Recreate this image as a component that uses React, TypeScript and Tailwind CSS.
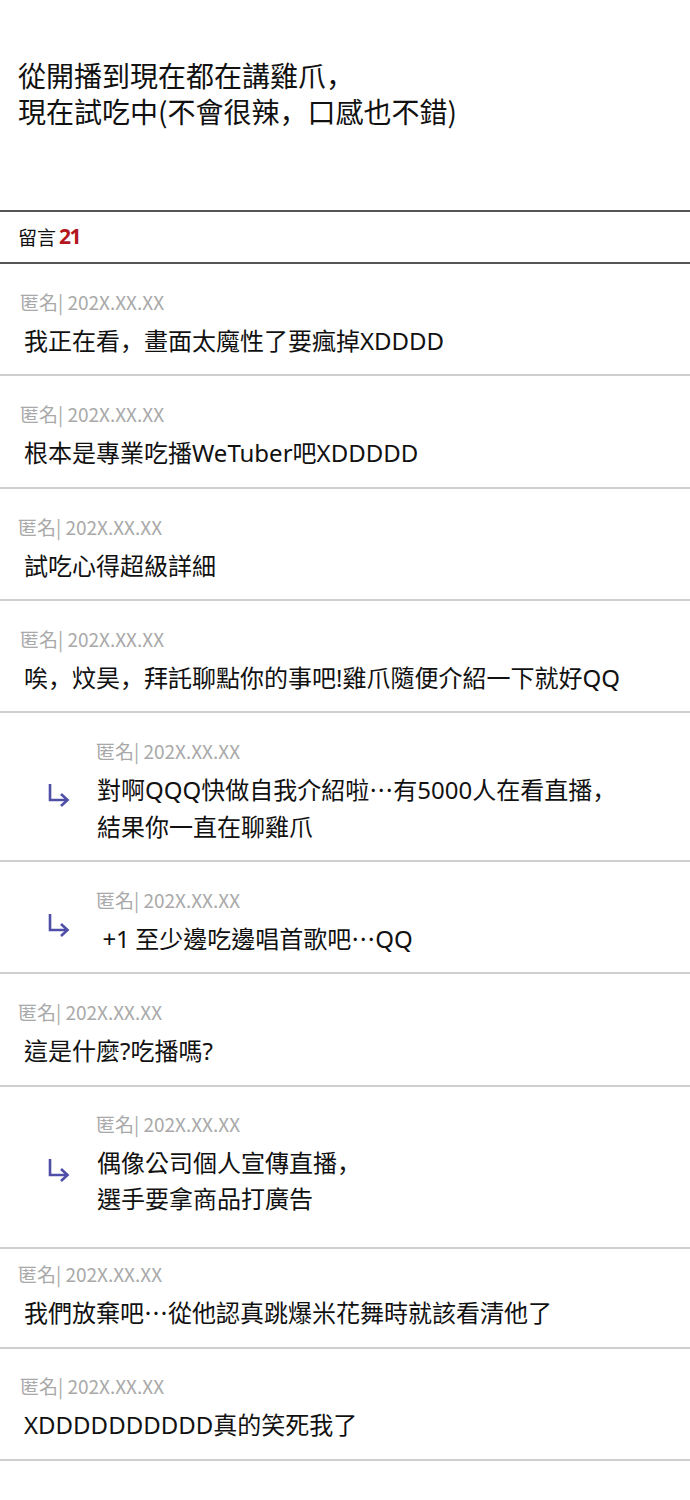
import React from "react";

type Item = {
  reply?: boolean;
  box: string;
  lines: string[];
  arrow?: string;
  spacer?: string;
  text?: string;
};

const items: Item[] = [
  { box: "h-[112px] pt-[26px]", lines: ["我正在看，畫面太魔性了要瘋掉XDDDD"] },
  { box: "h-[113px] pt-[26px]", lines: ["根本是專業吃播WeTuber吧XDDDDD"] },
  { box: "h-[112px] pt-[26px]", spacer: "w-[18px]", text: "ml-[6px]", lines: ["試吃心得超級詳細"] },
  { box: "h-[112px] pt-[26px]", lines: ["唉，炆昊，拜託聊點你的事吧!雞爪隨便介紹一下就好QQ"] },
  { box: "h-[149px] pt-[26px]", reply: true, arrow: "mt-[43px]", lines: ["對啊QQQ快做自我介紹啦…有5000人在看直播，", "結果你一直在聊雞爪"] },
  { box: "h-[112px] pt-[26px]", reply: true, arrow: "mt-[24px]", lines: [" +1 至少邊吃邊唱首歌吧…QQ"] },
  { box: "h-[113px] pt-[26px]", spacer: "w-[18px]", text: "ml-[6px]", lines: ["這是什麼?吃播嗎?"] },
  { box: "h-[162px] pt-[25px]", reply: true, arrow: "mt-[45px]", lines: ["偶像公司個人宣傳直播，", "選手要拿商品打廣告"] },
  { box: "h-[100px] pt-[13px]", spacer: "w-[18px]", text: "ml-[6px]", lines: ["我們放棄吧…從他認真跳爆米花舞時就該看清他了"] },
  { box: "h-[112px] pt-[25px]", lines: ["XDDDDDDDDDD真的笑死我了"] },
];

const LATIN = "font-['Noto_Sans','Noto_Sans_CJK_TC',sans-serif]";
const JP = "font-['Noto_Sans_CJK_JP','Noto_Sans_CJK_TC',sans-serif]";

function Rich({ text }: { text: string }) {
  const parts = text.split(/([A-Za-z0-9+!?]+|，)/).filter((p) => p !== "");
  return (
    <>
      {parts.map((p, i) => {
        if (p === "，") return <span key={i} className={`inline-block ${JP}`}>，</span>;
        if (/^[A-Za-z0-9+!?]+$/.test(p)) return <span key={i} className={`inline-block ${LATIN}`}>{p}</span>;
        return <span key={i} className="inline-block">{p}</span>;
      })}
    </>
  );
}

function Arrow() {
  return (
    <svg width="26" height="26" viewBox="0 0 26 26" fill="none">
      <path d="M4 2 V18 H21" stroke="#4f4fa8" strokeWidth="2.6" strokeLinejoin="miter" />
      <path d="M15 12 L21.5 18 L15 24" stroke="#4f4fa8" strokeWidth="2.6" strokeLinejoin="miter" />
    </svg>
  );
}

function Comment({ it }: { it: Item }) {
  return (
    <div className={`flex box-border border-b-2 border-[#cfcfcf] ${it.box}`}>
      {it.reply ? (
        <div className="w-[96px] shrink-0 pl-[46px]">
          <div className={it.arrow}>
            <Arrow />
          </div>
        </div>
      ) : (
        <div className={`shrink-0 ${it.spacer ?? "w-[20px]"}`} />
      )}
      <div className="flex flex-col">
        <div className="h-[24px] whitespace-pre text-[19px] leading-[24px] text-[#a9a9a9]">
          匿名| 202X.XX.XX
        </div>
        <div
          className={`mt-[8px] whitespace-pre text-[24px] leading-[36px] text-[#111] ${
            it.reply ? "ml-px" : it.text ?? "ml-[4px]"
          }`}
        >
          {it.lines.map((l, i) => (
            <div key={i}>
              <Rich text={l} />
            </div>
          ))}
        </div>
      </div>
    </div>
  );
}

export default function App() {
  return (
    <div className="min-h-[1500px] w-[690px] bg-white font-['Noto_Sans_CJK_TC','Noto_Sans',sans-serif]">
      <div className="pl-[18px] pt-[57px] text-[28px] leading-[36px] text-[#111]">
        <div>
          <Rich text="從開播到現在都在講雞爪，" />
        </div>
        <div>
          <Rich text="現在試吃中(不會很辣，口感也不錯)" />
        </div>
      </div>
      <div className="mt-[81px] box-border flex h-[54px] items-center border-y-2 border-[#555] pl-[18px]">
        <span className="text-[19px] text-[#111]">留言</span>
        <span className={`ml-[3px] text-[21px] font-bold tracking-[-1.5px] text-[#b3171d] ${LATIN}`}>21</span>
      </div>
      {items.map((it, i) => (
        <Comment key={i} it={it} />
      ))}
    </div>
  );
}
